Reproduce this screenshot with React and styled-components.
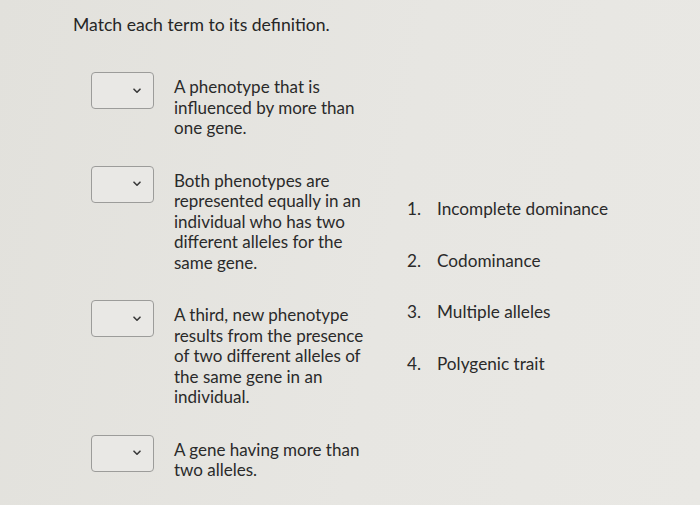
import React from 'react';
import styled, { createGlobalStyle } from 'styled-components';

const Global = createGlobalStyle`
  html, body {
    margin: 0;
    padding: 0;
    background: #e4e3df;
  }
  body {
    font-family: Lato, "Open Sans", sans-serif;
    color: #2a2a2a;
  }
`;

const Page = styled.div`
  width: 700px;
  height: 505px;
  box-sizing: border-box;
  padding: 13px 0 0 73px;
  background: linear-gradient(100deg, #e2e1dc 0%, #e7e6e2 55%, #e9e8e4 100%);
  overflow: hidden;
`;

const Title = styled.h1`
  margin: 0;
  font-size: 17.6px;
  font-weight: 400;
  line-height: 24px;
  color: #262626;
`;

const Body = styled.div`
  display: grid;
  grid-template-columns: 316px auto;
  margin-top: 35px;
`;

const Pairs = styled.div`
  display: flex;
  flex-direction: column;
  gap: 27px;
  padding-left: 18px;
`;

const Pair = styled.div`
  display: flex;
  align-items: flex-start;
  gap: 20px;
`;

const Select = styled.div`
  width: 63px;
  height: 37px;
  box-sizing: border-box;
  border: 1px solid #9c9c9a;
  border-radius: 4px;
  background: #e9e8e5;
  display: flex;
  align-items: center;
  justify-content: flex-end;
  padding-right: 12px;
  flex-shrink: 0;
`;

const Definition = styled.p`
  margin: 5px 0 0;
  width: 196px;
  font-size: 17px;
  line-height: 20.5px;
  color: #2a2a2a;
`;

const Terms = styled.ol`
  list-style: none;
  margin: 0;
  padding: 127px 0 0 18px;
  display: flex;
  flex-direction: column;
  gap: 31px;
`;

const Term = styled.li`
  display: flex;
  font-size: 17.2px;
  line-height: 20.5px;
  color: #2a2a2a;
`;

const Num = styled.span`
  width: 30px;
  flex-shrink: 0;
`;

const Chevron = () => (
  <svg width="8" height="6" viewBox="0 0 8 6">
    <path d="M1 1.2l3 3 3-3" fill="none" stroke="#3a3a3a" strokeWidth="1.6" strokeLinecap="round" strokeLinejoin="round" />
  </svg>
);

const definitions = [
  'A phenotype that is influenced by more than one gene.',
  'Both phenotypes are represented equally in an individual who has two different alleles for the same gene.',
  'A third, new phenotype results from the presence of two different alleles of the same gene in an individual.',
  'A gene having more than two alleles.',
];

const terms = ['Incomplete dominance', 'Codominance', 'Multiple alleles', 'Polygenic trait'];

export default function App() {
  return (
    <>
      <Global />
      <Page>
        <Title>Match each term to its definition.</Title>
        <Body>
          <Pairs>
            {definitions.map((d) => (
              <Pair key={d}>
                <Select>
                  <Chevron />
                </Select>
                <Definition>{d}</Definition>
              </Pair>
            ))}
          </Pairs>
          <Terms>
            {terms.map((t, i) => (
              <Term key={t}>
                <Num>{i + 1}.</Num>
                {t}
              </Term>
            ))}
          </Terms>
        </Body>
      </Page>
    </>
  );
}
